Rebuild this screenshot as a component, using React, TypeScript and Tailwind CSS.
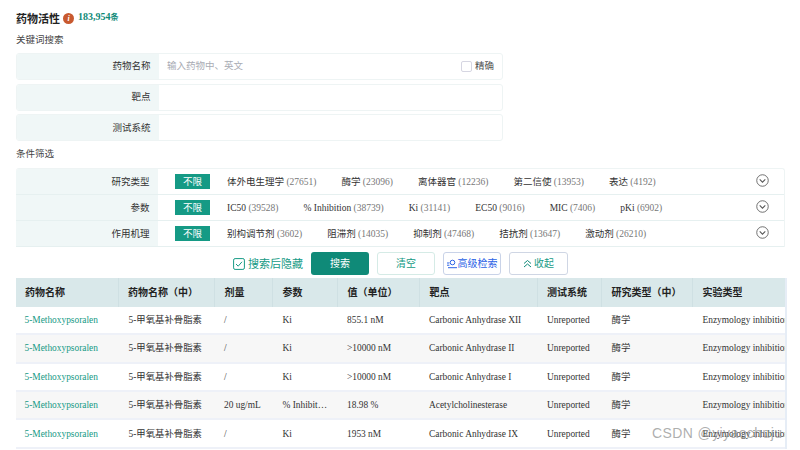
import React from "react";

const cols = "grid grid-cols-[102.5px_96.5px_58px_65px_82px_117.5px_64.5px_91px_92px]";
const search = [
  { label: "药物名称", placeholder: "输入药物中、英文", exact: true },
  { label: "靶点" },
  { label: "测试系统" },
];
const filters = [
  { label: "研究类型", items: [["体外电生理学", "(27651)"], ["酶学", "(23096)"], ["离体器官", "(12236)"], ["第二信使", "(13953)"], ["表达", "(4192)"]] },
  { label: "参数", items: [["IC50", "(39528)"], ["% Inhibition", "(38739)"], ["Ki", "(31141)"], ["EC50", "(9016)"], ["MIC", "(7406)"], ["pKi", "(6902)"]] },
  { label: "作用机理", items: [["别构调节剂", "(3602)"], ["阻滞剂", "(14035)"], ["抑制剂", "(47468)"], ["拮抗剂", "(13647)"], ["激动剂", "(26210)"]] },
];
const headers = ["药物名称", "药物名称（中）", "剂量", "参数", "值（单位）", "靶点", "测试系统", "研究类型（中）", "实验类型"];
const rows = [
  ["/", "Ki", "855.1 nM", "Carbonic Anhydrase XII"],
  ["/", "Ki", ">10000 nM", "Carbonic Anhydrase II"],
  ["/", "Ki", ">10000 nM", "Carbonic Anhydrase I"],
  ["20 ug/mL", "% Inhibit…", "18.98 %", "Acetylcholinesterase"],
  ["/", "Ki", "1953 nM", "Carbonic Anhydrase IX"],
];

function Chevron() {
  return (
    <svg className="-mt-[3px]" width="13" height="13" viewBox="0 0 14 14" fill="none" stroke="#555" strokeWidth="0.9">
      <circle cx="7" cy="7" r="6.2" />
      <path d="M4 5.8 7 8.8 10 5.8" strokeWidth="1.1" />
    </svg>
  );
}

export default function App() {
  return (
    <div className="relative h-[450px] w-[800px] overflow-hidden bg-white pl-4 font-['Liberation_Serif','Noto_Sans_CJK_SC',serif] text-[9.4px] text-[#333]">
      <div className="flex h-[29px] items-end pb-[4px]">
        <span className="text-[11px] leading-[14px] font-bold text-[#222] font-['Noto_Sans_CJK_SC',sans-serif]">药物活性</span>
        <span className="ml-[3px] mb-[1px] flex h-[11px] w-[11px] items-center justify-center rounded-full bg-[#c8592f] text-[8px] leading-none font-bold text-white italic">i</span>
        <span className="ml-[4px] text-[10px] leading-[14px] font-bold text-[#0f8a78]">
          183,954<span className="text-[8px]">条</span>
        </span>
      </div>
      <div className="mt-[3px] h-[21px] text-[9.5px] leading-[14px] text-[#444] font-['Noto_Sans_CJK_SC',sans-serif]">关键词搜索</div>

      <div className="flex w-[487px] flex-col gap-[3.6px]">
        {search.map((s) => (
          <div key={s.label} className="flex h-[27px] overflow-hidden rounded-[3px] border border-[#eef4f4]">
            <div className="flex w-[142px] items-center justify-end bg-[#f0f7f7] pr-[8.5px] text-[9.5px] text-[#333]">{s.label}</div>
            <div className="flex flex-1 items-center justify-between pr-[8px] pl-[8px]">
              <span className="text-[9.5px] text-[#a9acb4]">{s.placeholder}</span>
              {s.exact && (
                <span className="flex items-center gap-[3px] text-[9.5px] text-[#555]">
                  <span className="h-[11px] w-[11px] rounded-[2px] border border-[#d6d6e2]" />
                  精确
                </span>
              )}
            </div>
          </div>
        ))}
      </div>

      <div className="mt-[6px] h-[21px] text-[9.5px] leading-[14px] text-[#444]">条件筛选</div>

      <div className="w-[769px] overflow-hidden rounded-t-[3px] border-t border-r border-[#eef4f4]">
        {filters.map((f) => (
          <div key={f.label} className="flex h-[26px] border-b border-[#e6f0f0]">
            <div className="flex w-[142px] items-center justify-end bg-[#f0f7f7] pr-[8.5px] text-[9.5px] text-[#333]">{f.label}</div>
            <div className="flex flex-1 items-center pr-[15.5px] pl-[17px]">
              <span className="flex h-[15px] w-[35px] items-center justify-center bg-[#159a85] text-[9.5px] text-white">不限</span>
              <div className="ml-[17px] flex flex-1 items-center gap-[25px]">
                {f.items.map(([name, count]) => (
                  <span key={name} className="text-[9.5px] whitespace-nowrap text-[#333]">
                    {name} <span className="text-[#777]">{count}</span>
                  </span>
                ))}
              </div>
              <Chevron />
            </div>
          </div>
        ))}
      </div>

      <div className="flex h-[31.2px] w-[769px] items-center justify-center pt-[2px]">
        <span className="flex items-center gap-[3px] text-[11px] text-[#159a85]">
          <svg width="12" height="12" viewBox="0 0 12 12" fill="none" stroke="#159a85">
            <rect x="0.6" y="0.6" width="10.8" height="10.8" rx="1.5" strokeWidth="1" />
            <path d="M3 6 5.2 8.2 9 3.8" strokeWidth="1" />
          </svg>
          搜索后隐藏
        </span>
        <button className="ml-[8px] h-[23px] w-[58px] rounded-[3px] bg-[#0f8a78] text-[10px] text-white">搜索</button>
        <button className="ml-[8px] h-[23px] w-[58px] rounded-[3px] border border-[#d5ebe6] text-[10px] text-[#159a85]">清空</button>
        <button className="ml-[8px] flex h-[23px] w-[58px] items-center justify-center gap-[1px] rounded-[3px] border border-[#c9d3e8] text-[10px] text-[#2a62e6]">
          <svg width="10" height="10" viewBox="0 0 10 10" fill="none" stroke="#2a62e6" strokeWidth="1">
            <circle cx="5.5" cy="3.5" r="2.3" />
            <path d="M0 4h2.4M0 6.2h2.4M1 8.7h9" />
          </svg>
          高级检索
        </button>
        <button className="ml-[8px] flex h-[23px] w-[59px] items-center justify-center gap-[2px] rounded-[3px] border border-[#cfd6e4] text-[10px] text-[#159a85]">
          <svg width="9" height="9" viewBox="0 0 9 9" fill="none" stroke="#0f8a78" strokeWidth="1">
            <path d="M1 4.5 4.5 1.5 8 4.5M1 8 4.5 5 8 8" />
          </svg>
          收起
        </button>
      </div>

      <div className="w-[771px] border-r-2 border-[#e6edf6]">
        <div className={`${cols} h-[28.5px] bg-[#d9e8ea] text-[10px] font-bold text-[#222]`}>
          {headers.map((h) => (
            <div key={h} className="flex items-center border-r border-[#cfe0e3] pl-[9.5px] whitespace-nowrap first:pl-[9px] last:border-r-0">
              {h}
            </div>
          ))}
        </div>
        <div className="border-l border-[#e6edf6]">
          {rows.map((r, i) => (
            <div key={i} className={`${cols} -ml-px h-[28.4px] items-center border-b-2 border-[#eef1f8] ${i % 2 ? "bg-[#f7f7f7]" : "bg-white"}`}>
              <div className="pl-[8.5px] text-[#159a85]">5-Methoxypsoralen</div>
              <div className="pl-[10px]">5-甲氧基补骨脂素</div>
              <div className="pl-[9px]">{r[0]}</div>
              <div className="pl-[9.5px]">{r[1]}</div>
              <div className="pl-[9px]">{r[2]}</div>
              <div className="pl-[9px]">{r[3]}</div>
              <div className="pl-[9.5px]">Unreported</div>
              <div className="pl-[9.5px]">酶学</div>
              <div className="overflow-hidden pl-[9.5px] whitespace-nowrap">Enzymology inhibition</div>
            </div>
          ))}
        </div>
      </div>

      <span className="absolute top-[424px] left-[652px] font-['Liberation_Sans',sans-serif] text-[14px] leading-[18px] tracking-[0.4px] whitespace-nowrap text-[#8a8a8a]/70">
        CSDN @yiyaochuju
      </span>
    </div>
  );
}
